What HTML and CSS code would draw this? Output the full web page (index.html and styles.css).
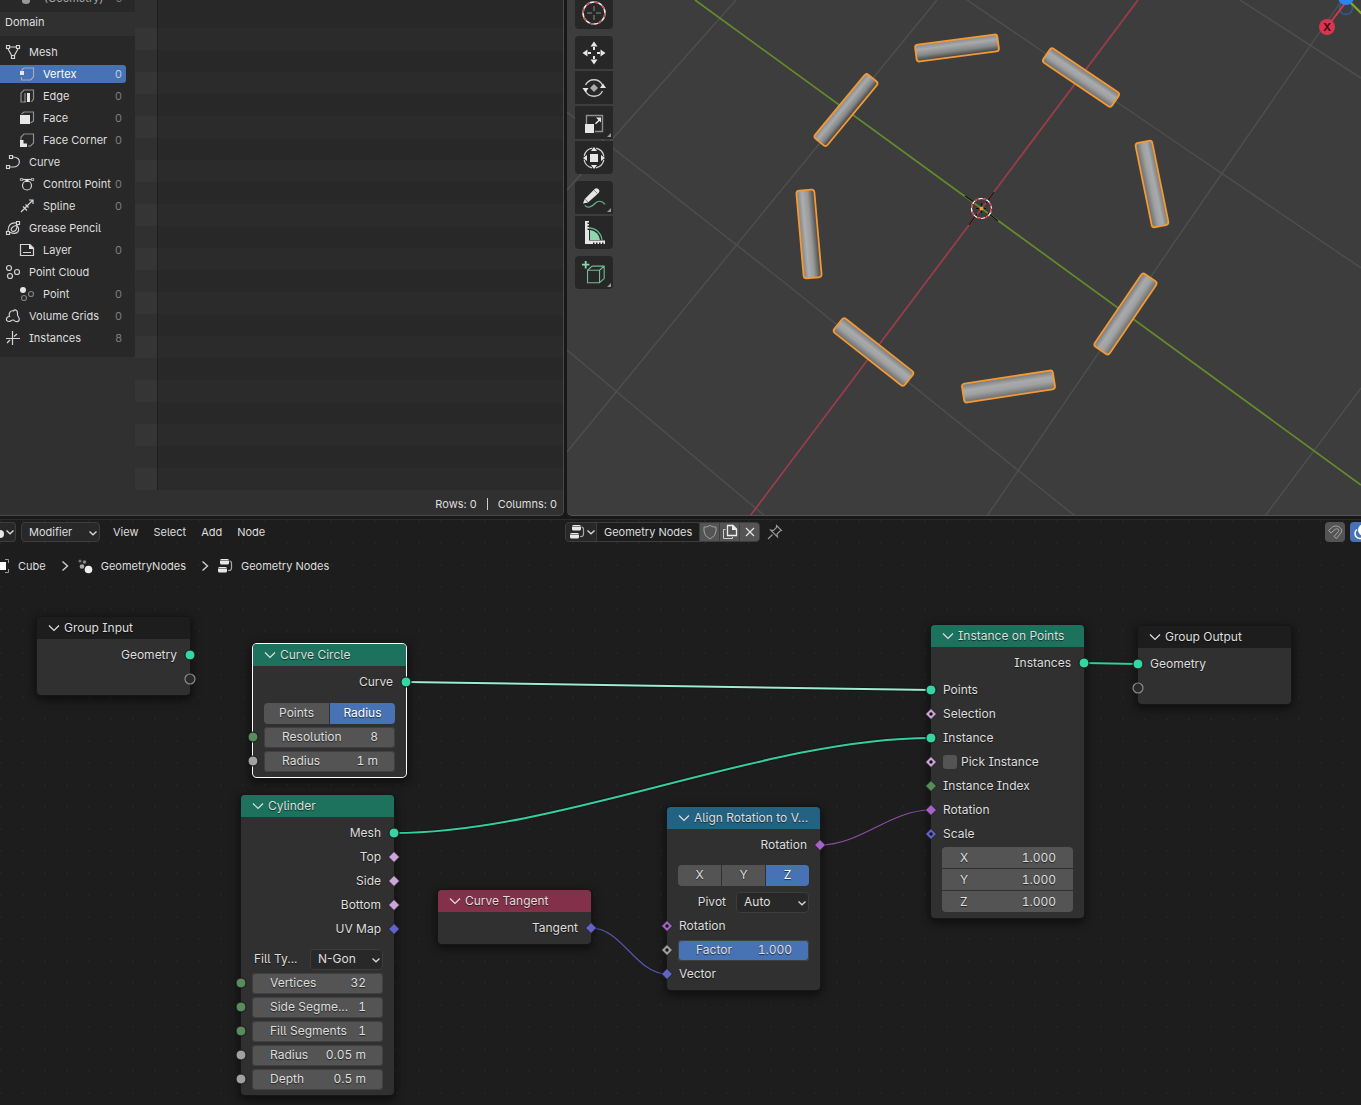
FILE: index.html
```html
<!DOCTYPE html>
<html lang="en">
<head>
<meta charset="utf-8">
<meta name="viewport" content="width=device-width, initial-scale=1">
<title>Geometry Nodes</title>
<link rel="stylesheet" href="styles.css">
</head>
<body>
<svg class="defs" width="0" height="0" aria-hidden="true">
  <defs>
    <symbol id="chev" viewBox="0 0 10 6"><path d="M1.500 1.500L5 4.800L8.500 1.500" fill="none" stroke="#d8d8d8" stroke-width="1.300"/></symbol>
    <symbol id="fold" viewBox="0 0 12 8"><path d="M1 1.500L6 6.500L11 1.500" fill="none" stroke="#e0e0e0" stroke-width="1.200"/></symbol>
    <symbol id="crumb" viewBox="0 0 8 12"><path d="M1.500 1.500L6.500 6L1.500 10.500" fill="none" stroke="#cfcfcf" stroke-width="1.400"/></symbol>
    <symbol id="nodetree" viewBox="0 0 16 16"><rect x="3" y="1" width="9" height="5.500" rx="1.500" fill="#e8e8e8"/><rect x="1" y="9" width="9" height="5.500" rx="1.500" fill="#e8e8e8"/><path d="M3 2.500h9M1 10.500h9" stroke="#555" stroke-width=".7"/><path d="M12.500 3q2 0 2 2.500V10q0 2.500-2.500 2.500h-1" fill="none" stroke="#a8a8a8" stroke-width="1.200"/></symbol>
    <symbol id="dot" viewBox="0 0 14 14"><circle cx="7" cy="7" r="5" fill="currentColor" stroke="#151515"/></symbol>
    <symbol id="dia" viewBox="0 0 14 14"><path d="M7 1.500L12.500 7L7 12.500L1.500 7z" fill="currentColor" stroke="#151515" stroke-width=".8"/></symbol>
    <symbol id="diadot" viewBox="0 0 14 14"><path d="M7 1.500L12.500 7L7 12.500L1.500 7z" fill="currentColor" stroke="#151515" stroke-width=".8"/><circle cx="7" cy="7" r="1.700" fill="#151515"/></symbol>
    <symbol id="ring" viewBox="0 0 14 14"><circle cx="7" cy="7" r="5" fill="#2a2a2a" stroke="#8c8c8c" stroke-width="1.200"/></symbol>
  </defs>
</svg>
<main class="app">
  <section class="sheet" aria-label="Spreadsheet">
    <div class="sheet-main">
      <aside class="side">
        <div class="cut"><svg width="12" height="6" viewBox="0 0 12 6"><path d="M2 0h8v1q0 3-4 3T2 1z" fill="#999"/></svg><span>(Geometry)</span><span class="n">0</span></div>
        <h2 class="domain">Domain</h2>
        <ul class="tree">
          <li><svg class="ic" viewBox="0 0 16 16"><path d="M4 3h8M3 5l4 7M13 5l-4 7" /><path d="M1.500 1.500h3v3h-3zM11.500 1.500h3v3h-3zM6.500 11.500h3v3h-3z"/></svg><span>Mesh</span></li>
          <li class="sub on"><svg class="ic" viewBox="0 0 16 16"><path opacity=".6" d="M5 2h9.500v9l-3 3H2.500v-3M2.500 4.500L5 2"/><path class="s" d="M1 5h4v4H1z"/></svg><span>Vertex</span><span class="n">0</span></li>
          <li class="sub"><svg class="ic" viewBox="0 0 16 16"><path opacity=".6" d="M7 14H2V5l3-3h9.500v9l-2 3"/><path opacity=".6" d="M6 5v9"/><path class="s" d="M8 5h3v9H8z"/></svg><span>Edge</span><span class="n">0</span></li>
          <li class="sub"><svg class="ic" viewBox="0 0 16 16"><path opacity=".6" d="M2.500 4L5 2h9.500v9l-3 2"/><path class="s" d="M1 5h10v9H1z"/></svg><span>Face</span><span class="n">0</span></li>
          <li class="sub"><svg class="ic" viewBox="0 0 16 16"><path opacity=".6" d="M2 8V5l3-3h9.500v9l-3 3H9"/><path class="s" d="M1 8h3.500v3.500H8V15H1z"/></svg><span>Face Corner</span><span class="n">0</span></li>
          <li><svg class="ic" viewBox="0 0 16 16"><path d="M8 3c9 0 8 10 0 10H5"/><path d="M4.500 1.500h3v3h-3zM1.500 11.500h3v3h-3z"/></svg><span>Curve</span></li>
          <li class="sub"><svg class="ic" viewBox="0 0 16 16"><circle cx="8" cy="9.500" r="4.500"/><path d="M4 3.500h8"/><path opacity=".7" d="M1.500 2.500h2v2h-2zM12.500 2.500h2v2h-2z"/><path class="s" d="M6.500 3h3v3h-3z"/></svg><span>Control Point</span><span class="n">0</span></li>
          <li class="sub"><svg class="ic" viewBox="0 0 16 16"><path d="M2 14L14 2M10 2h4v4M4 8.500l4 4M6.500 6.500l3 3"/></svg><span>Spline</span><span class="n">0</span></li>
          <li><svg class="ic" viewBox="0 0 16 16"><path d="M11.500 3C5 2 3 6 3 11.500M5 12.500c9 3 10-3 7-7-5 0-8 5-4 6 3 0 4-3 4-6"/><path d="M11.500 1.500h3v3h-3zM1.500 11.500h3v3h-3z"/></svg><span>Grease Pencil</span></li>
          <li class="sub"><svg class="ic" viewBox="0 0 16 16"><path d="M1.500 2.500H11l3.500 3.500v7.500h-13zM4 10.500h8"/><path class="s" d="M10 2l5 5h-5z"/></svg><span>Layer</span><span class="n">0</span></li>
          <li><svg class="ic" viewBox="0 0 16 16"><circle cx="4" cy="4" r="2.500"/><circle cx="5" cy="12" r="2.500"/><circle cx="12" cy="8" r="2.500"/></svg><span>Point Cloud</span></li>
          <li class="sub"><svg class="ic" viewBox="0 0 16 16"><circle class="s" cx="4" cy="4" r="3"/><circle opacity=".5" cx="5" cy="12" r="2.500"/><circle opacity=".5" cx="12" cy="8" r="2.500"/></svg><span>Point</span><span class="n">0</span></li>
          <li><svg class="ic" viewBox="0 0 16 16"><path d="M4 13.500c-4 0-3-5 .5-5C3 5 6 2 8.500 3c1-2 4-1 4 2 0 2-.5 2 1 4 2 3 0 5-2.500 4.500-2 0-1-1.500-3-1.500s-2 1.500-4 1.500z"/></svg><span>Volume Grids</span><span class="n">0</span></li>
          <li><svg class="ic" viewBox="0 0 16 16"><path d="M7.500 1v14M1 8.500h14M2 13l3-3M9 6.500L12 4"/></svg><span>Instances</span><span class="n">8</span></li>
        </ul>
      </aside>
      <div class="rows"><div class="index-col"></div></div>
    </div>
    <footer class="status"><span>Rows: 0</span><i></i><span>Columns: 0</span></footer>
  </section>

  <section class="view" aria-label="3D Viewport">
    <svg class="scene" viewBox="567 0 794 516" preserveAspectRatio="xMinYMin slice">
      <defs>
        <linearGradient id="cyl" x1="0" y1="0" x2="0" y2="1"><stop offset="0" stop-color="#777"/><stop offset=".35" stop-color="#a9aaab"/><stop offset=".6" stop-color="#a0a1a2"/><stop offset="1" stop-color="#6a6a6a"/></linearGradient>
        <linearGradient id="cyld" x1="0" y1="0" x2="0" y2="1"><stop offset="0" stop-color="#888"/><stop offset=".3" stop-color="#a9aaab"/><stop offset=".65" stop-color="#858686"/><stop offset="1" stop-color="#3c3c3c"/></linearGradient>
        <linearGradient id="cylu" x1="0" y1="0" x2="0" y2="1"><stop offset="0" stop-color="#444"/><stop offset=".4" stop-color="#999"/><stop offset=".7" stop-color="#adaeaf"/><stop offset="1" stop-color="#808080"/></linearGradient>
      </defs>
      <path fill="none" stroke="#4e4e4e" stroke-width="1.500" d="M736 0L567 190M937 0L567 452M567 112L780 279L1075 516M567 350L765 516M967 0L1180 145L1361 268M1342 0L1180 234L987 516M1240 0L1361 78M1361 388L1265 516"/>
      <path d="M695 0L981.500 208.500L1361 485" stroke="#648b2b" stroke-width="1.700" fill="none"/>
      <path d="M1138 0L981.500 208.500L750 516" stroke="#9c3d4a" stroke-width="1.700" fill="none"/>
      <g stroke="#f39a35" stroke-width="1.800">
        <rect x="-41.500" y="-8.500" width="83" height="17" rx="3" fill="url(#cyld)" transform="translate(957 48) rotate(-7.500)"/>
        <rect x="-41.500" y="-8.500" width="83" height="17" rx="3" fill="url(#cyl)" transform="translate(1081 77.500) rotate(34)"/>
        <rect x="-41.500" y="-8" width="83" height="16" rx="3" fill="url(#cyld)" transform="translate(846 110) rotate(-50.400)"/>
        <rect x="-43" y="-8.500" width="86" height="17" rx="3" fill="url(#cyl)" transform="translate(1152 184) rotate(78.500)"/>
        <rect x="-44" y="-9" width="88" height="18" rx="3" fill="url(#cylu)" transform="translate(809 234) rotate(85)"/>
        <rect x="-45" y="-9" width="90" height="18" rx="3" fill="url(#cyl)" transform="translate(873.500 352) rotate(38.200)"/>
        <rect x="-44" y="-9" width="88" height="18" rx="3" fill="url(#cyl)" transform="translate(1125.500 314) rotate(-55.800)"/>
        <rect x="-46" y="-9.500" width="92" height="19" rx="3" fill="url(#cyl)" transform="translate(1008.500 386.500) rotate(-8.800)"/>
      </g>
      <path d="M965 196l10 7M988 213l10 8M994 192l-8 11M977 214l-8 11M981.500 203v10M976 208.500h10" stroke="#111" stroke-width="1.200"/>
      <circle cx="981.500" cy="208.500" r="10" fill="none" stroke="#fff" stroke-width="1.200"/>
      <circle cx="981.500" cy="208.500" r="10" fill="none" stroke="#e01f1f" stroke-width="1.200" stroke-dasharray="4 4"/>
      <circle cx="981.500" cy="208.500" r="2" fill="#f39a35"/>
      <circle cx="1346" cy="8" r="6.500" fill="#3a3f46" stroke="#2d5f9c" stroke-width="1.300"/>
      <path d="M1346 -2L1362 14" stroke="#7fb01c" stroke-width="2"/>
      <path d="M1346 2L1327 27" stroke="#d8354f" stroke-width="2"/>
      <circle cx="1346" cy="-3" r="8" fill="#2c84f0"/>
      <circle cx="1327" cy="27" r="8" fill="#d8354f"/>
      <text x="1327" y="31" text-anchor="middle" class="axis">X</text>
    </svg>
    <nav class="tools" aria-label="Tools">
      <div class="grp">
        <button aria-label="Cursor"><svg viewBox="0 0 24 24"><circle cx="12" cy="12" r="11" stroke="#ececec" stroke-width="1.500"/><circle cx="12" cy="12" r="11" stroke="#bd4a4a" stroke-width="1.500" stroke-dasharray="4.500 4.100"/><path d="M12 5v5M12 14v5M5 12h5M14 12h5" stroke="#8a8a8a"/></svg></button>
      </div>
      <div class="grp">
        <button aria-label="Move"><svg viewBox="0 0 24 24"><path class="w" d="M12 .5l3.500 5h-7zM12 23.500l3.500-5h-7zM.5 12l5-3.500v7zM23.500 12l-5-3.500v7zM11 6h2v3h-2zM11 15h2v3h-2zM6 11h3v2H6zM15 11h3v2h-3z"/></svg></button>
        <button aria-label="Rotate"><svg viewBox="0 0 24 24"><path d="M3.500 9a9.500 9.500 0 0 1 17 0M20.500 15a9.500 9.500 0 0 1-17 0" stroke="#cfcfcf" stroke-width="1.300"/><path class="w" d="M.5 12h6L3.500 16.500zM18 12h6l-3-4.500z"/><path d="M12 8l4 4-4 4-4-4z" fill="#aaa"/></svg></button>
        <button aria-label="Scale"><svg viewBox="0 0 24 24"><path d="M4.500 13V4.500h16v16H13" stroke="#8e8e8e" stroke-width="1.400"/><path class="w" d="M3 13h9v9H3zM14 6.500h5v5l-1.600-1.600-3.400 3.400-1-1 3.400-3.400z"/></svg><i></i></button>
        <button aria-label="Transform"><svg viewBox="0 0 24 24"><circle cx="12" cy="12" r="10" stroke="#cfcfcf" stroke-width="1.300" stroke-dasharray="11.700 4" stroke-dashoffset="-2"/><path class="w" d="M8 8h8v8H8zM12 1l3 4H9zM12 23l3-4H9zM1 12l4-3v6zM23 12l-4-3v6z"/></svg></button>
      </div>
      <div class="grp">
        <button aria-label="Annotate"><svg viewBox="0 0 26 24"><path d="M3 20c4 4 8 1 11-2s7-4 11 1" stroke="#62b58c" stroke-width="1.300"/><path class="w" d="M1 18l2-5L14 2q2-1.500 4 .5t0 4L6.500 17z"/><path d="M3.500 13.500l3 3M13 3.500l3.500 3.500" stroke="#555" stroke-width=".8"/></svg><i></i></button>
        <button aria-label="Measure"><svg viewBox="0 0 24 24"><path fill="#8fd6b0" d="M8 19V9a11 11 0 0 1 10 10z"/><path d="M7 7A13 13 0 0 1 20 19" stroke="#62b58c" stroke-width="1.300"/><path class="w" d="M3 0h4v1.500H5.500v1.500H7v1.500H5.500V6H7v1.500H5.500V9H7v10.500h16v3.500h-1.500v-1.500H20V23h-1.500v-1.500H17V23h-1.500v-1.500H14V23h-1.500v-1.500H11V23H3z"/></svg></button>
      </div>
      <div class="grp">
        <button aria-label="Add Cube"><svg viewBox="0 0 26 24"><path fill="#8fd6b0" d="M3 -1h2v3h3v2H5v3H3V4H0V2h3z"/><path d="M6 9h13v13.500H6zM6 9l5-4.500h13V18l-5 4.500M19 9l5-4.500" stroke="#74bb96" stroke-width="1.200"/></svg><i></i></button>
      </div>
    </nav>
  </section>

  <section class="editor" aria-label="Geometry Node Editor">
    <div class="canvas">
      <svg class="links" width="1361" height="586">
        <g fill="none" stroke="#111" stroke-width="4" opacity=".7"><path d="M406 163L931 171M394 314C560 314 765 219 931 219M1084 144L1138 145"/></g>
        <g fill="none" stroke-width="2"><path d="M406 163L931 171" stroke="#9debd3"/><path d="M394 314C560 314 765 219 931 219M1084 144L1138 145" stroke="#35cf9f"/></g>
        <path d="M591 409C622 409 636 455 667 455" fill="none" stroke="#5655b0" stroke-width="1.200"/>
        <path d="M820 326C861 326 890 291 931 291" fill="none" stroke="#8a4fa3" stroke-width="1.200"/>
      </svg>

      <article class="node plain n-input">
        <h3><svg><use href="#fold"/></svg>Group Input</h3>
        <div class="row out">Geometry<svg class="sk geo"><use href="#dot"/></svg></div>
        <div class="row out"><svg class="sk"><use href="#ring"/></svg></div>
      </article>

      <article class="node geometry active n-circle">
        <h3><svg><use href="#fold"/></svg>Curve Circle</h3>
        <div class="row out">Curve<svg class="sk geo"><use href="#dot"/></svg></div>
        <div class="row seg wide"><button>Points</button><button class="sel">Radius</button></div>
        <div class="row"><svg class="sk int"><use href="#dot"/></svg><label class="field"><span>Resolution</span><input value="8"></label></div>
        <div class="row"><svg class="sk flt"><use href="#dot"/></svg><label class="field"><span>Radius</span><input value="1 m"></label></div>
      </article>

      <article class="node geometry n-cylinder">
        <h3><svg><use href="#fold"/></svg>Cylinder</h3>
        <div class="row out">Mesh<svg class="sk geo"><use href="#dot"/></svg></div>
        <div class="row out">Top<svg class="sk bool"><use href="#dia"/></svg></div>
        <div class="row out">Side<svg class="sk bool"><use href="#dia"/></svg></div>
        <div class="row out">Bottom<svg class="sk bool"><use href="#dia"/></svg></div>
        <div class="row out">UV Map<svg class="sk vec"><use href="#dia"/></svg></div>
        <div class="row pick first"><label for="fill">Fill Ty...</label><span class="drop"><select id="fill"><option>N-Gon</option></select><svg><use href="#chev"/></svg></span></div>
        <div class="row"><svg class="sk int"><use href="#dot"/></svg><label class="field"><span>Vertices</span><input value="32"></label></div>
        <div class="row"><svg class="sk int"><use href="#dot"/></svg><label class="field"><span>Side Segme...</span><input value="1"></label></div>
        <div class="row"><svg class="sk int"><use href="#dot"/></svg><label class="field"><span>Fill Segments</span><input value="1"></label></div>
        <div class="row"><svg class="sk flt"><use href="#dot"/></svg><label class="field"><span>Radius</span><input value="0.05 m"></label></div>
        <div class="row"><svg class="sk flt"><use href="#dot"/></svg><label class="field"><span>Depth</span><input value="0.5 m"></label></div>
      </article>

      <article class="node input n-tangent">
        <h3><svg><use href="#fold"/></svg>Curve Tangent</h3>
        <div class="row out">Tangent<svg class="sk vec"><use href="#dia"/></svg></div>
      </article>

      <article class="node convert n-align">
        <h3><svg><use href="#fold"/></svg>Align Rotation to V...</h3>
        <div class="row out">Rotation<svg class="sk rot"><use href="#dia"/></svg></div>
        <div class="row seg"><button>X</button><button>Y</button><button class="sel">Z</button></div>
        <div class="row pick right"><label for="pivot">Pivot</label><span class="drop"><select id="pivot"><option>Auto</option></select><svg><use href="#chev"/></svg></span></div>
        <div class="row"><svg class="sk rot"><use href="#diadot"/></svg>Rotation</div>
        <div class="row"><svg class="sk flt"><use href="#diadot"/></svg><label class="field full"><span>Factor</span><input value="1.000"></label></div>
        <div class="row"><svg class="sk vec"><use href="#dia"/></svg>Vector</div>
      </article>

      <article class="node geometry n-instance">
        <h3><svg><use href="#fold"/></svg>Instance on Points</h3>
        <div class="row out last-out">Instances<svg class="sk geo"><use href="#dot"/></svg></div>
        <div class="row"><svg class="sk geo"><use href="#dot"/></svg>Points</div>
        <div class="row"><svg class="sk bool"><use href="#diadot"/></svg>Selection</div>
        <div class="row"><svg class="sk geo"><use href="#dot"/></svg>Instance</div>
        <div class="row"><svg class="sk bool"><use href="#diadot"/></svg><label class="check"><input type="checkbox">Pick Instance</label></div>
        <div class="row"><svg class="sk int"><use href="#dia"/></svg>Instance Index</div>
        <div class="row"><svg class="sk rot"><use href="#dia"/></svg>Rotation</div>
        <div class="row"><svg class="sk vec"><use href="#diadot"/></svg>Scale</div>
        <div class="stack">
          <label class="field"><span>X</span><input value="1.000"></label>
          <label class="field"><span>Y</span><input value="1.000"></label>
          <label class="field"><span>Z</span><input value="1.000"></label>
        </div>
      </article>

      <article class="node plain n-output">
        <h3><svg><use href="#fold"/></svg>Group Output</h3>
        <div class="row"><svg class="sk geo"><use href="#dot"/></svg>Geometry</div>
        <div class="row"><svg class="sk"><use href="#ring"/></svg></div>
      </article>
    </div>

    <header class="bar">
      <div class="menus">
        <button class="kind" aria-label="Editor type"><svg width="4" height="12" viewBox="0 0 4 12"><circle cx="0" cy="8" r="4" fill="#e8e8e8"/></svg><svg width="10" height="6"><use href="#chev"/></svg></button>
        <span class="drop mode"><select aria-label="Context"><option>Modifier</option></select><svg><use href="#chev"/></svg></span>
        <button>View</button><button>Select</button><button>Add</button><button>Node</button>
      </div>
      <div class="ident">
        <div class="block">
          <button class="browse" aria-label="Browse node trees"><svg width="16" height="16"><use href="#nodetree"/></svg><svg width="10" height="6"><use href="#chev"/></svg></button>
          <input aria-label="Name" value="Geometry Nodes">
          <button class="sq" aria-label="Fake user"><svg width="16" height="16" viewBox="0 0 16 16"><path d="M8 1.500q3 2 6 1.500v4q0 5-6 8-6-3-6-8V3q3 .5 6-1.500z" stroke="#a0a0a0"/></svg></button>
          <button class="sq" aria-label="New"><svg width="16" height="16" viewBox="0 0 16 16"><path d="M5.500 1.500H11L14.500 5v6.500h-9z" stroke="#eee" stroke-width="1.300"/><path d="M10 1v5h5z" fill="#eee"/><path d="M3.500 5.500h-2v9h9v-1.500" stroke="#ccc"/></svg></button>
          <button class="sq" aria-label="Unlink"><svg width="16" height="16" viewBox="0 0 16 16"><path d="M4 4l8 8M12 4l-8 8" stroke="#e4e4e4" stroke-width="1.200"/></svg></button>
        </div>
        <button class="pin" aria-label="Pin"><svg width="16" height="16" viewBox="0 0 16 16"><path d="M9.500 1.500l5 5-1.500.5-3 3 .5 3-7-7 3 .5 3-3zM5.500 10.500L1 15" stroke="#9a9a9a" stroke-width="1.100"/></svg></button>
        <div class="right">
          <button class="sq snap" aria-label="Snap"><svg width="16" height="16" viewBox="0 0 16 16"><path d="M1.500 6.500l4-3.500C9 .5 15.500 3 14.500 8L9.500 14.500l-2.500-2L11.500 7.500c1-2.500-1.500-3.500-3.500-2L4 9z" stroke="#a8a8a8"/></svg></button>
          <button class="sq over" aria-label="Overlays"><svg width="18" height="18" viewBox="0 0 18 18"><circle cx="13" cy="7" r="6" fill="#fff"/><path d="M6 6.500a5 5 0 1 0 7 7" stroke="#fff" stroke-width="1.500"/></svg></button>
        </div>
      </div>
    </header>
    <nav class="crumbs" aria-label="Breadcrumbs">
      <a href="#cube"><svg width="10" height="16" viewBox="0 0 10 16"><path d="M0 4h6v8H0z" fill="#fff"/><path d="M5 1.500h3.500V5M8.500 11v3.500H5" fill="none" stroke="#999"/></svg>Cube</a>
      <svg class="sep"><use href="#crumb"/></svg>
      <a href="#mod"><svg width="16" height="16" viewBox="0 0 16 16"><circle cx="11.500" cy="11.500" r="3.800" fill="#eee"/><circle cx="5" cy="8.500" r="2.300" fill="#aaa"/><circle cx="7.500" cy="4" r="1.800" fill="#888"/><circle cx="3" cy="3" r="1.500" fill="#777"/></svg>GeometryNodes</a>
      <svg class="sep"><use href="#crumb"/></svg>
      <a href="#tree"><svg width="16" height="16"><use href="#nodetree"/></svg>Geometry Nodes</a>
    </nav>
  </section>
</main>
</body>
</html>
```
FILE: styles.css
```css
* { box-sizing: border-box; }
html, body { height: 100%; }
body {
  margin: 0;
  overflow: hidden;
  background: #181818;
  color: #dedede;
  font: 11px/16px Inter, "Liberation Sans", sans-serif;
  font-feature-settings: "cv05", "cv08";
}
button, input, select {
  font: inherit;
  font-feature-settings: inherit;
  color: inherit;
  margin: 0;
  padding: 0;
  border: 0;
  background: none;
  min-width: 0;
}
h2, h3, ul { margin: 0; padding: 0; font-size: inherit; font-weight: 400; }
svg { display: block; flex: none; }
.defs { position: absolute; }

.app {
  display: grid;
  height: 100vh;
  grid-template-columns: 564fr 794fr;
  grid-template-rows: 516fr 586fr;
  gap: 3px;
}

/* Spreadsheet */
.sheet {
  display: flex;
  flex-direction: column;
  min-height: 0;
  overflow: hidden;
  background: #303030;
  border-bottom: 1px solid #484848;
  border-right: 1px solid #484848;
  border-radius: 0 0 5px 0;
}
.sheet-main { display: flex; flex: 1; min-height: 0; }
.side { width: 135px; flex: none; overflow: hidden; }
.cut {
  display: flex;
  height: 12px;
  padding: 0 13px 0 20px;
  gap: 12px;
  background: #282828;
  color: #aaa;
}
.cut span { margin-top: -10px; }
.domain { height: 24px; padding-left: 5px; line-height: 20px; }
.tree {
  list-style: none;
  padding: 7px 9px 6px 0;
  background: #282828;
  border-radius: 0 0 4px 0;
}
.tree li {
  display: flex;
  align-items: center;
  height: 18px;
  margin-bottom: 4px;
  padding: 0 4px 0 5px;
  white-space: nowrap;
}
.tree .sub { padding-left: 19px; }
.tree .on { background: #4772b3; border-radius: 0 3px 3px 0; color: #fff; }
.n { margin-left: auto; color: #7d7d7d; }
.on .n { color: #b9cbe6; }
.ic { width: 16px; height: 16px; margin-right: 8px; fill: none; stroke: #d4d4d4; stroke-width: 1.2px; }
.ic .s { fill: #e6e6e6; stroke: none; }
.rows {
  flex: 1;
  background: repeating-linear-gradient(#282828 0 22px, #2b2b2b 22px 44px) 0 6px;
}
.index-col {
  width: 23px;
  height: 100%;
  border-right: 1px solid #1e1e1e;
  background: repeating-linear-gradient(#303030 0 22px, #353535 22px 44px) 0 6px;
}
.status {
  display: flex;
  align-items: center;
  justify-content: flex-end;
  height: 25px;
  padding: 2px 6px 0 0;
  gap: 10px;
}
.status i { width: 1px; height: 12px; background: #ccc; }

/* Viewport */
.view {
  position: relative;
  min-height: 0;
  overflow: hidden;
  background: #3d3d3d;
  border-bottom: 1px solid #555;
  border-radius: 0 0 0 5px;
}
.scene { position: absolute; inset: 0; width: 100%; height: 100%; }
.axis { font-size: 11px; font-weight: 700; fill: #4a0c18; }
.tools {
  position: relative;
  display: flex;
  flex-direction: column;
  width: 38px;
  margin: -4px 0 0 8px;
  gap: 7px;
}
.grp { display: flex; flex-direction: column; gap: 2px; }
.grp button {
  position: relative;
  display: grid;
  place-items: center;
  height: 33px;
  background: #272727;
}
.grp button:first-child { border-radius: 4px 4px 0 0; }
.grp button:last-child { border-radius: 0 0 4px 4px; }
.grp button:only-child { border-radius: 4px; }
.grp svg { width: 24px; height: 24px; fill: none; overflow: visible; }
.grp .w { fill: #e6e6e6; }
.grp i {
  position: absolute;
  right: 2px;
  bottom: 2px;
  border: 2px solid #999;
  border-top-color: transparent;
  border-left-color: transparent;
}

/* Node editor */
.editor {
  position: relative;
  grid-column: 1 / -1;
  min-height: 0;
  overflow: hidden;
  border-top: 1px solid #2c2c2c;
  background: #1d1d1d radial-gradient(circle at 1px 1px, #232323 1px, transparent 1px) 0 0 / 22px 22px;
}
.canvas { position: absolute; inset: -1px 0 0 0; font-size: 12px; }
.links { position: absolute; left: 0; top: 0; }
.bar {
  position: relative;
  display: grid;
  grid-template-columns: 565fr 796fr;
  height: 24px;
  align-items: center;
}
.menus { display: flex; align-items: center; gap: 15px; }
.kind {
  display: flex;
  align-items: center;
  gap: 1px;
  width: 16px;
  height: 20px;
  margin-right: -10px;
  border: 1px solid #3d3d3d;
  border-left: 0;
  border-radius: 0 4px 4px 0;
  background: #282828;
}
.drop { position: relative; display: block; width: 73px; height: 21px; }
.drop select {
  appearance: none;
  width: 100%;
  height: 100%;
  padding-left: 7px;
  border: 1px solid #3d3d3d;
  border-radius: 4px;
  background: #282828;
}
.drop svg { position: absolute; right: 2px; top: 8px; width: 10px; height: 6px; }
.mode { width: 79px; height: 20px; margin-right: -2px; }
.ident { display: flex; align-items: center; }
.block {
  display: flex;
  height: 20px;
  gap: 1px;
  border: 1px solid #3d3d3d;
  border-radius: 4px;
  background: #3d3d3d;
  overflow: hidden;
}
.block input { width: 102px; padding-left: 7px; background: #1d1d1d; }
.browse { display: flex; align-items: center; gap: 1px; width: 30px; padding-left: 3px; background: #282828; }
.sq { display: grid; place-items: center; width: 19px; background: #545454; }
.sq svg, .pin svg { fill: none; }
.pin { margin-left: 7px; }
.ident .right { display: flex; gap: 5px; margin: 0 -9px 0 auto; }
.right .sq { width: 20px; height: 20px; border-radius: 4px; }
.right .over { background: #4772b3; }
.crumbs { position: relative; display: flex; align-items: center; height: 44px; gap: 15px; }
.crumbs a { display: flex; align-items: center; gap: 8px; color: inherit; text-decoration: none; }
.crumbs .sep { width: 8px; height: 12px; margin-right: -7px; }

/* Nodes */
.node {
  position: absolute;
  width: 153px;
  padding-bottom: 4px;
  border-radius: 4px;
  background: #303030;
  box-shadow: 0 0 0 1px #161616, 0 3px 8px 2px rgba(0, 0, 0, .5);
  text-shadow: 0 1px 1px rgba(0, 0, 0, .6);
  white-space: nowrap;
}
.node h3 {
  display: flex;
  align-items: center;
  height: 22px;
  margin-bottom: 4px;
  padding-left: 11px;
  gap: 4px;
  border-radius: 4px 4px 0 0;
}
.node h3 svg { width: 12px; height: 8px; }
.geometry h3 { background: #1d725e; }
.input h3 { background: #83314a; }
.convert h3 { background: #246283; }
.plain h3 { background: #1d1d1d; }
.active { box-shadow: 0 0 0 1px #fff, 0 3px 8px 3px rgba(0, 0, 0, .5); }
.n-input { left: 37px; top: 98px; }
.n-circle { left: 253px; top: 125px; }
.n-cylinder { left: 241px; top: 276px; }
.n-tangent { left: 438px; top: 371px; }
.n-align { left: 667px; top: 288px; }
.n-instance { left: 931px; top: 106px; }
.n-output { left: 1138px; top: 107px; }
.row {
  position: relative;
  display: flex;
  align-items: center;
  height: 24px;
  padding: 0 12px;
}
.out { justify-content: flex-end; padding-right: 13px; }
.last-out { margin-bottom: 3px; }
.sk { position: absolute; left: -7px; top: 5px; width: 14px; height: 14px; }
.out .sk { left: auto; right: -7px; }
.geo { color: #35d6a4; }
.int { color: #598c5c; }
.flt { color: #a1a1a1; }
.bool { color: #cca6d6; }
.vec { color: #6363c7; }
.rot { color: #a663c7; }
.row:has(.field) { padding: 0 11px; }
.field {
  display: flex;
  align-items: center;
  flex: 1;
  height: 21px;
  padding: 0 17px 0 18px;
  border-radius: 4px;
  background: #545454;
  box-shadow: 0 0 0 1px #404040 inset;
}
.field input { flex: 1; width: 10px; text-align: right; text-shadow: inherit; font-variant-numeric: tabular-nums; }
.full { background: #4772b3; }
.stack { display: grid; gap: 1px; margin: 1px 11px 2px; }
.stack .field { border-radius: 0; box-shadow: none; }
.stack .field:first-child { border-radius: 4px 4px 0 0; }
.stack .field:last-child { border-radius: 0 0 4px 4px; }
.seg { display: grid; grid-auto-flow: column; grid-auto-columns: 1fr; gap: 1px; margin-top: 6px; padding: 0 11px; }
.wide { margin-top: 7px; }
.seg button { height: 21px; background: #545454; text-shadow: inherit; }
.seg button:first-child { border-radius: 4px 0 0 4px; }
.seg button:last-child { border-radius: 0 4px 4px 0; }
.seg .sel { background: #4772b3; color: #fff; }
.pick { justify-content: space-between; padding: 0 11px 0 13px; }
.first { margin-top: 6px; }
.right.pick { justify-content: flex-end; gap: 10px; margin: 3px 0 0; }
.check { display: flex; align-items: center; gap: 4px; }
.check input { appearance: none; width: 14px; height: 14px; border-radius: 3px; background: #545454; }
```
